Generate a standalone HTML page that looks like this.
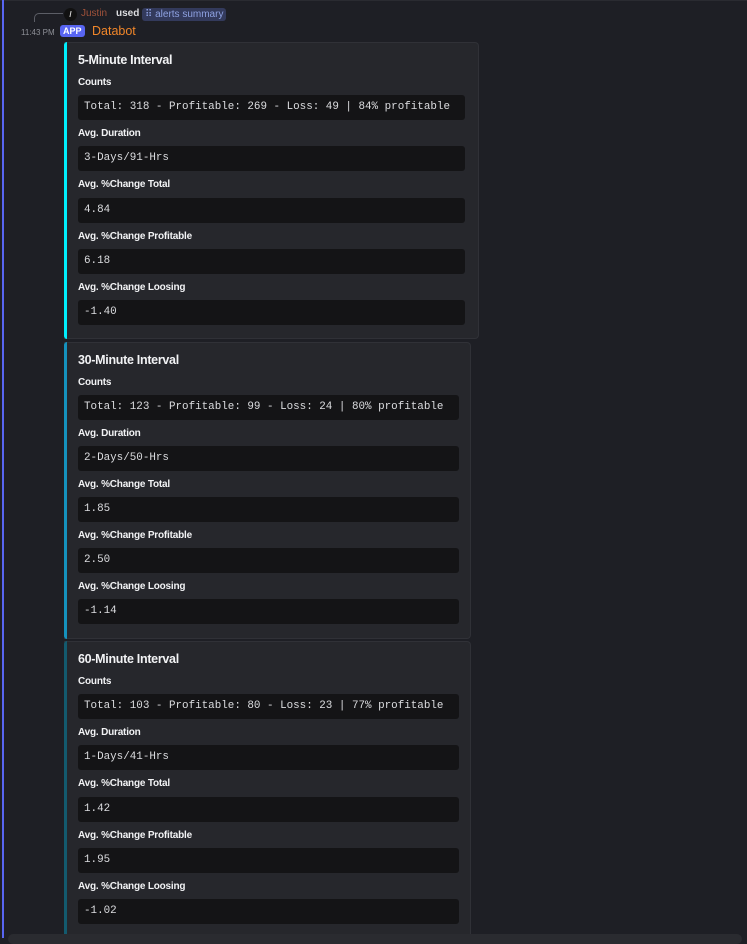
<!DOCTYPE html>
<html><head><style>
body{margin:0;width:747px;height:938px;background:#1e1f25;overflow:hidden;font-family:"Liberation Sans",sans-serif;position:relative}
.bar{position:absolute;left:2px;top:0;width:2px;height:938px;background:#5865f2}
.top{position:absolute;left:0;top:0;width:747px;height:6px;border-top:1px solid #2a2b31}
.embed{position:absolute;left:64px;background:#26272c;border:1px solid #303137;border-left:none;border-radius:0 4px 4px 0}
.t{position:absolute;left:14px;top:10px;color:#f2f3f5;font-weight:bold;font-size:12.5px;letter-spacing:-0.3px}
.l{position:absolute;left:14px;color:#f2f3f5;font-weight:bold;font-size:10px;letter-spacing:-0.2px;margin-top:1px}
.c{position:absolute;left:14px;height:25px;background:#141416;border-radius:3px;color:#dcdde0;font-family:"Liberation Mono",monospace;font-size:10.9px;line-height:25px;padding-left:6px;box-sizing:border-box;white-space:pre;overflow:hidden}
</style></head><body>
<div class="top"></div>
<div class="bar"></div>
<div style="position:absolute;left:34px;top:13px;width:28px;height:8px;border-left:1px solid #5c5e66;border-top:1px solid #5c5e66;border-radius:5px 0 0 0"></div>
<div style="position:absolute;left:64px;top:8px;width:13px;height:13px;border-radius:50%;background:#111;color:#ddd;font-size:8px;text-align:center;line-height:13px;font-weight:bold">/</div>
<div style="position:absolute;left:81px;top:8px;font-size:10px;color:#a0523a">Justin</div>
<div style="position:absolute;left:116px;top:8px;font-size:10px;color:#dcdde0;font-weight:bold">used</div>
<div style="position:absolute;left:142px;top:8px;height:13px;padding:0 3px;background:#333a5c;color:#8ea1e1;font-size:10px;line-height:13px;border-radius:3px">⠿ alerts summary</div>
<div style="position:absolute;left:21px;top:28px;font-size:8px;color:#8e9097">11:43 PM</div>
<div style="position:absolute;left:60px;top:25px;height:12px;padding:0 3px;background:#5865f2;color:#fff;font-size:9px;font-weight:bold;line-height:12px;border-radius:3px">APP</div>
<div style="position:absolute;left:92px;top:24px;font-size:12.5px;color:#f0862a">Databot</div>

<div class="embed" style="top:42px;width:414px;height:295px">
<div style="position:absolute;left:0;top:-1px;bottom:-1px;width:3px;background:#00eefc;border-radius:3px 0 0 3px"></div>
<div class="t">5-Minute Interval</div>
<div class="l" style="top:33px">Counts</div><div class="c" style="top:52px;width:387px">Total: 318 - Profitable: 269 - Loss: 49 | 84% profitable</div>
<div class="l" style="top:84px">Avg. Duration</div><div class="c" style="top:103px;width:387px">3-Days/91-Hrs</div>
<div class="l" style="top:135px">Avg. %Change Total</div><div class="c" style="top:155px;width:387px">4.84</div>
<div class="l" style="top:187px">Avg. %Change Profitable</div><div class="c" style="top:206px;width:387px">6.18</div>
<div class="l" style="top:238px">Avg. %Change Loosing</div><div class="c" style="top:257px;width:387px">-1.40</div>
</div>

<div class="embed" style="top:342px;width:406px;height:295px">
<div style="position:absolute;left:0;top:-1px;bottom:-1px;width:3px;background:#1592bd;border-radius:3px 0 0 3px"></div>
<div class="t">30-Minute Interval</div>
<div class="l" style="top:33px">Counts</div><div class="c" style="top:52px;width:381px">Total: 123 - Profitable: 99 - Loss: 24 | 80% profitable</div>
<div class="l" style="top:84px">Avg. Duration</div><div class="c" style="top:103px;width:381px">2-Days/50-Hrs</div>
<div class="l" style="top:135px">Avg. %Change Total</div><div class="c" style="top:154px;width:381px">1.85</div>
<div class="l" style="top:186px">Avg. %Change Profitable</div><div class="c" style="top:205px;width:381px">2.50</div>
<div class="l" style="top:237px">Avg. %Change Loosing</div><div class="c" style="top:256px;width:381px">-1.14</div>
</div>

<div class="embed" style="top:641px;width:406px;height:300px">
<div style="position:absolute;left:0;top:-1px;bottom:-1px;width:3px;background:#135a6e;border-radius:3px 0 0 3px"></div>
<div class="t">60-Minute Interval</div>
<div class="l" style="top:33px">Counts</div><div class="c" style="top:52px;width:381px">Total: 103 - Profitable: 80 - Loss: 23 | 77% profitable</div>
<div class="l" style="top:84px">Avg. Duration</div><div class="c" style="top:103px;width:381px">1-Days/41-Hrs</div>
<div class="l" style="top:135px">Avg. %Change Total</div><div class="c" style="top:155px;width:381px">1.42</div>
<div class="l" style="top:187px">Avg. %Change Profitable</div><div class="c" style="top:206px;width:381px">1.95</div>
<div class="l" style="top:238px">Avg. %Change Loosing</div><div class="c" style="top:257px;width:381px">-1.02</div>
</div>
<div style="position:absolute;left:8px;top:934px;width:734px;height:10px;background:#2a2b30;border-radius:5px"></div>
</body></html>
